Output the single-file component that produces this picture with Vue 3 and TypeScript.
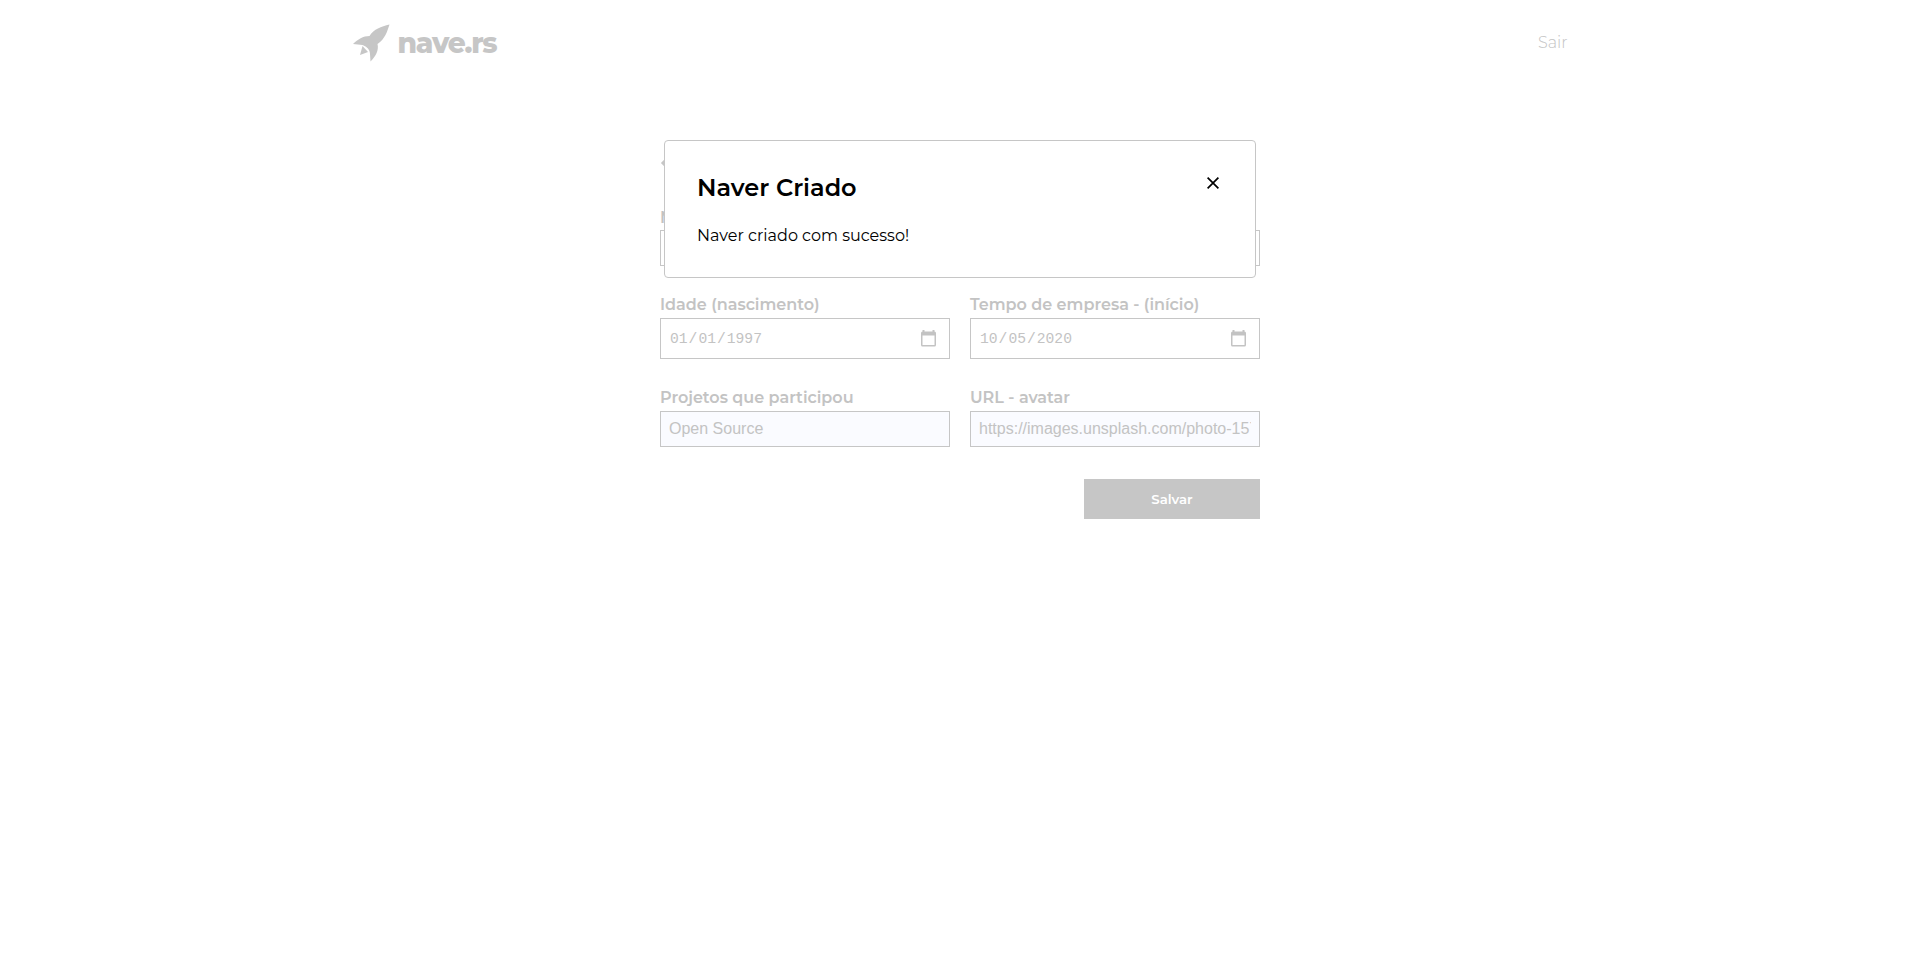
<script setup lang="ts">
import { ref } from 'vue'

interface Field {
  id: string
  label: string
  value: string
  kind: 'text' | 'date'
  filled?: boolean
}

const rows: Field[][] = [
  [
    { id: 'name', label: 'Nome', value: '', kind: 'text' },
    { id: 'role', label: '', value: '', kind: 'text' },
  ],
  [
    { id: 'birth', label: 'Idade (nascimento)', value: '01/01/1997', kind: 'date' },
    { id: 'start', label: 'Tempo de empresa - (início)', value: '10/05/2020', kind: 'date' },
  ],
  [
    { id: 'projects', label: 'Projetos que participou', value: 'Open Source', kind: 'text', filled: true },
    { id: 'avatar', label: 'URL - avatar', value: 'https://images.unsplash.com/photo-157', kind: 'text', filled: true },
  ],
]

const open = ref(true)
</script>

<template>
  <div class="page">
    <header class="header">
      <div class="logo">
        <svg width="37" height="38" viewBox="0 0 37 38">
          <path d="M36.500 0.500 C28 2.500 21 5 16.500 12 C10 12 5 15.500 0 20 L9.500 21 C14 22.500 17 26 17 30 L17.500 37.500 C23 32 26 26 24.500 20 C32 15 34 8 36.500 0.500Z" />
          <path d="M9.500 22 L7 31 L15 28Z" />
        </svg>
        <span class="wordmark">nave.rs</span>
      </div>
      <a class="logout">Sair</a>
    </header>

    <main class="content">
      <div class="heading">
        <svg width="12" height="20" viewBox="0 0 12 20"><path d="M11 2 L3 10 L11 18" /></svg>
      </div>
      <form class="form" @submit.prevent>
        <div v-for="(row, i) in rows" :key="i" class="row">
          <div v-for="field in row" :key="field.id" class="field">
            <label :for="field.id">{{ field.label }}</label>
            <div v-if="field.kind === 'date'" :id="field.id" class="control date">
              <span class="digits">
                <template v-for="(part, n) in field.value.split('/')" :key="n">
                  <span v-if="n">/</span><span class="part">{{ part }}</span>
                </template>
              </span>
              <svg width="15" height="17" viewBox="0 0 15 17">
                <path fill-rule="evenodd" d="M1.500 0h2v1.500h8V0h2v1.500Q15 1.500 15 3v12q0 1.500-1.500 1.500h-12Q0 16.500 0 15V3Q0 1.500 1.500 1.500zM1.500 5.500v9.500h12V5.500z" />
              </svg>
            </div>
            <input v-else :id="field.id" class="control" :class="{ filled: field.filled }" type="text" :value="field.value" />
          </div>
        </div>
        <button class="save" type="submit">Salvar</button>
      </form>
    </main>

    <div v-if="open" class="modal" role="dialog">
      <div class="message">
        <h2>Naver Criado</h2>
        <p>Naver criado com sucesso!</p>
      </div>
      <button class="close" type="button" aria-label="Fechar" @click="open = false">
        <svg width="12" height="12" viewBox="0 0 12 12"><path d="M.6.6 11.400 11.400M11.400.6.6 11.400" /></svg>
      </button>
    </div>
  </div>
</template>

<style>
body {
  background: #fff;
}
</style>

<style scoped>
.page {
  position: relative;
  min-height: 969px;
  box-sizing: border-box;
  display: flow-root;
  font-family: Montserrat, Inter, sans-serif;
  color: #c3c3c3;
}
.header {
  width: 1215px;
  height: 84px;
  margin: 0 auto;
  display: flex;
  justify-content: space-between;
  align-items: center;
}
.logo {
  display: flex;
  align-items: center;
  gap: 8px;
  padding-top: 1px;
}
.logo svg {
  fill: #c6c6c6;
}
.wordmark {
  color: #c6c6c6;
  font-size: 28px;
  font-weight: 800;
  line-height: 40px;
  letter-spacing: -1.2px;
}
.logout {
  font-size: 16px;
  font-weight: 300;
}
.content {
  width: 600px;
  margin: 59px auto 0;
}
.heading {
  height: 40px;
  display: flex;
  align-items: center;
}
.heading svg {
  fill: none;
  stroke: #c6c6c6;
  stroke-width: 3;
}
h2,
p {
  margin: 0;
}
.form {
  display: flex;
  flex-direction: column;
  gap: 25px;
  margin-top: 22px;
}
.row {
  display: grid;
  grid-template-columns: 290px 290px;
  gap: 20px;
}
.row:nth-child(3) {
  margin-top: 2px;
}
.field {
  display: flex;
  flex-direction: column;
}
label {
  height: 25px;
  line-height: 25px;
  font-size: 16px;
  font-weight: 600;
  white-space: nowrap;
}
.row:nth-child(2) label {
  height: 27px;
  line-height: 28px;
}
.row:nth-child(3) label {
  line-height: 24px;
}
.control {
  box-sizing: border-box;
  width: 290px;
  height: 36px;
  margin: 0;
  padding: 0 8px;
  border: 1px solid #c6c6c6;
  border-radius: 0;
  outline: none;
  background: #fff;
  color: #c3c3c3;
  font: 16px "Liberation Sans", Arial, sans-serif;
}
.filled {
  background: #fafbff;
}
.date {
  height: 41px;
  display: flex;
  align-items: center;
  justify-content: space-between;
  padding-right: 13px;
  font: 14.670px "Liberation Mono", monospace;
}
.digits {
  display: flex;
}
.part {
  padding: 0 1px;
}
.date svg {
  fill: #c3c3c3;
}
.row:nth-child(3) .control {
  padding-bottom: 1px;
}
.save {
  width: 176px;
  height: 40px;
  margin-top: 7px;
  padding-bottom: 2px;
  align-self: flex-end;
  border: 0;
  background: #c6c6c6;
  color: #fff;
  font: 600 13.333px Montserrat, Inter, sans-serif;
}
.modal {
  position: absolute;
  left: 664px;
  top: 140px;
  width: 592px;
  height: 138px;
  box-sizing: border-box;
  padding: 32px;
  border: 1px solid #c6c6c6;
  border-radius: 4px;
  background: #fff;
  color: #000;
  display: flex;
  justify-content: space-between;
  align-items: flex-start;
}
h2 {
  font-size: 24px;
  line-height: 30px;
  font-weight: 600;
}
p {
  margin-top: 20px;
  font-size: 16px;
  line-height: 26px;
  font-weight: 400;
}
.close {
  display: flex;
  margin: 4px 4px 0 0;
  padding: 0;
  border: 0;
  background: none;
}
.close svg {
  fill: none;
  stroke: #000;
  stroke-width: 1.700;
}
</style>
